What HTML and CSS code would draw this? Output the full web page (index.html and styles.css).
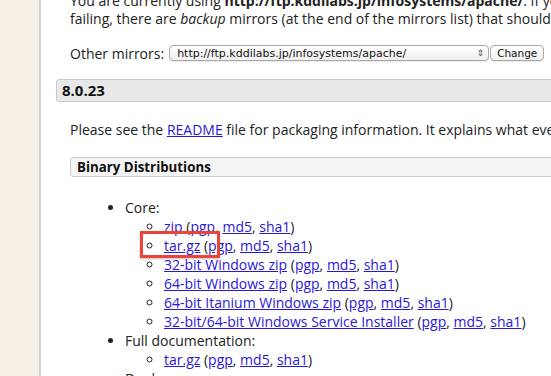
FILE: index.html
```html
<!DOCTYPE html>
<html lang="en">
<head>
    <meta charset="UTF-8">
    <title>Apache Tomcat - Download</title>
    <link rel="stylesheet" href="styles.css">
</head>
<body>
    <div class="sidebar"></div>

    <div class="main">
        <p class="intro">
            You are currently using <b>http://ftp.kddilabs.jp/infosystems/apache/</b>. If you encounter a problem with this mirror, please select another<br>
            failing, there are <i>backup</i> mirrors (at the end of the mirrors list) that should be available.
        </p>

        <form class="mirrors">
            <span>Other mirrors:</span>
            <span class="select">
                <span class="select-value">http://ftp.kddilabs.jp/infosystems/apache/</span>
                <span class="select-arrows">&#8661;</span>
            </span>
            <span class="button">Change</span>
        </form>

        <h3 class="section-title">8.0.23</h3>

        <div class="text">
            <p class="readme">Please see the <a href="#">README</a> file for packaging information. It explains what every distribution contains.</p>

            <h4 class="sub-title">Binary Distributions</h4>

            <ul class="dist">
                <li>Core:
                    <ul>
                        <li><a href="#">zip</a> (<a href="#">pgp</a>, <a href="#">md5</a>, <a href="#">sha1</a>)</li>
                        <li class="marked"><a href="#">tar.gz</a> (<a href="#">pgp</a>, <a href="#">md5</a>, <a href="#">sha1</a>)<span class="highlight"></span></li>
                        <li><a href="#">32-bit Windows zip</a> (<a href="#">pgp</a>, <a href="#">md5</a>, <a href="#">sha1</a>)</li>
                        <li><a href="#">64-bit Windows zip</a> (<a href="#">pgp</a>, <a href="#">md5</a>, <a href="#">sha1</a>)</li>
                        <li><a href="#">64-bit Itanium Windows zip</a> (<a href="#">pgp</a>, <a href="#">md5</a>, <a href="#">sha1</a>)</li>
                        <li><a href="#">32-bit/64-bit Windows Service Installer</a> (<a href="#">pgp</a>, <a href="#">md5</a>, <a href="#">sha1</a>)</li>
                    </ul>
                </li>
                <li>Full documentation:
                    <ul>
                        <li><a href="#">tar.gz</a> (<a href="#">pgp</a>, <a href="#">md5</a>, <a href="#">sha1</a>)</li>
                    </ul>
                </li>
                <li>Deployer:</li>
            </ul>
        </div>
    </div>
</body>
</html>
```

FILE: styles.css
```css
html, body {
    height: 100%;
}
body {
    margin: 0;
    font-family: 'Open Sans', sans-serif;
    font-size: 14px;
    color: #222;
    background: #fff;
    display: flex;
    overflow: hidden;
}
a {
    color: #2a17d8;
}
.sidebar {
    flex: none;
    width: 39px;
    background: #f6efe3;
    border-right: 2px solid #cfcfcf;
}
.main {
    flex: none;
    width: 620px;
    padding-left: 15px;
    margin-top: -8px;
}
.intro {
    margin: 0 0 16px 14px;
    line-height: 18px;
    white-space: nowrap;
}
.mirrors {
    margin-left: 14px;
    display: flex;
    align-items: center;
    gap: 5px;
    height: 18px;
    white-space: nowrap;
}
.select, .button {
    display: flex;
    align-items: center;
    height: 14px;
    border: 1px solid #a9a9a9;
    border-radius: 4px;
    background: linear-gradient(#fff, #f0f0f0);
    font-family: 'DejaVu Sans', sans-serif;
    font-size: 11px;
    color: #111;
    box-shadow: 0 1px 0 rgba(0, 0, 0, 0.08);
}
.select {
    width: 307px;
    padding: 0 4px 0 7px;
    justify-content: space-between;
}
.select-arrows {
    font-size: 9px;
    color: #555;
}
.button {
    margin-left: -4px;
    padding: 0 6px;
    font-size: 10.5px;
}
.section-title {
    margin: 17px 0 0;
    height: 21px;
    line-height: 21px;
    padding: 0 5px;
    font-size: 15px;
    font-weight: bold;
    background: #e8e8e8;
    border: 1px solid #c9c9c9;
    border-radius: 3px;
    color: #111;
}
.readme {
    margin: 19px 0 0 14px;
    line-height: 18px;
    white-space: nowrap;
}
.sub-title {
    margin: 18px 0 0 14px;
    height: 18px;
    line-height: 18px;
    padding: 0 6px;
    font-size: 13.3px;
    font-weight: bold;
    background: #f4f4f4;
    border: 1px solid #cfcfcf;
    border-radius: 3px;
    color: #111;
}
.dist {
    margin: 21px 0 0 29px;
    padding-left: 40px;
    line-height: 19px;
    white-space: nowrap;
}
.dist ul {
    margin: 0;
    padding-left: 39px;
    list-style: circle;
}
.marked {
    position: relative;
}
.highlight {
    position: absolute;
    left: -24px;
    top: -5px;
    width: 74px;
    height: 21px;
    border: 3px solid #ea4538;
    box-shadow: 0 1px 2px rgba(0, 0, 0, 0.25);
}
```
